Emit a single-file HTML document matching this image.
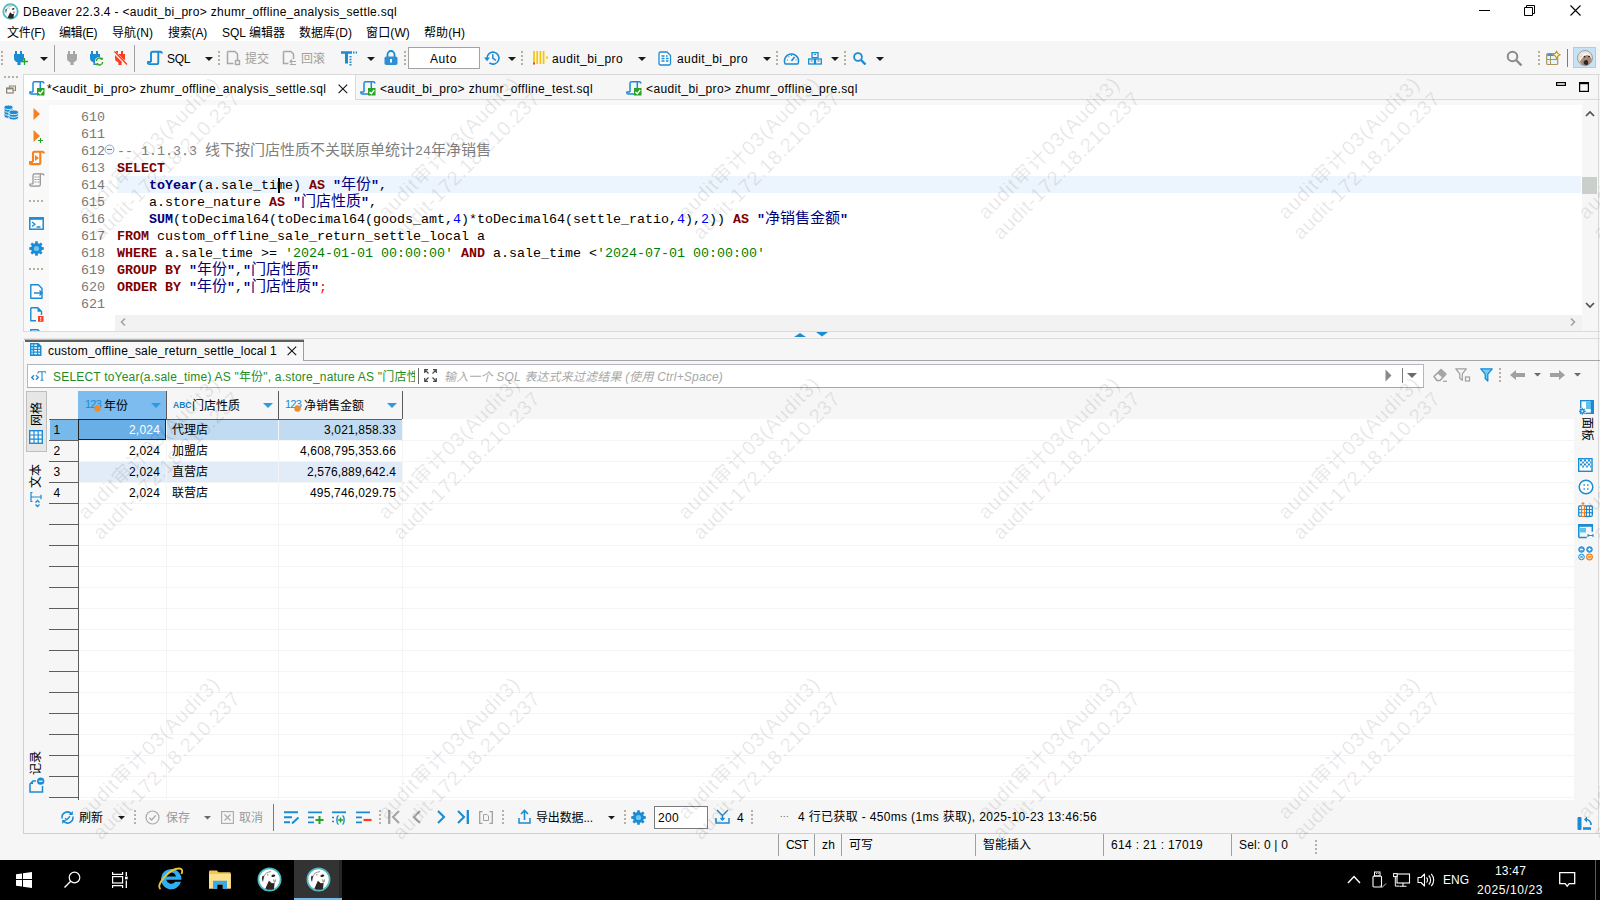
<!DOCTYPE html>
<html lang="zh"><head><meta charset="utf-8"><title>DBeaver</title><style>
html,body{margin:0;padding:0;}
body{width:1600px;height:900px;overflow:hidden;background:#fff;position:relative;font-family:"Liberation Sans","Noto Sans CJK SC",sans-serif;font-size:12px;}
.t{position:absolute;white-space:pre;display:block;}
.r{position:absolute;display:block;}
.cj{font-family:"Noto Sans CJK SC",sans-serif;}

.k{color:#7f0000;font-weight:bold;}
.f{color:#000080;font-weight:bold;}
.q{color:#000080;font-weight:bold;}
.n{color:#0000ff;}
.s{color:#008000;}
.c{color:#808080;}
.cc{font-family:"Noto Sans CJK SC",sans-serif;font-size:15px;letter-spacing:0;font-weight:normal;line-height:0;position:relative;top:-0.5px;}
.wm{position:absolute;width:300px;height:50px;transform:rotate(-45deg);transform-origin:50% 50%;text-align:center;color:rgba(0,0,0,0.062);text-shadow:0 0 1px rgba(0,0,0,0.045);font-size:20px;line-height:24.500px;white-space:pre;pointer-events:none;}
</style></head><body>
<div class="r" style="left:0px;top:0px;width:1600px;height:41px;background:#fff;"></div>
<div class="r" style="left:0px;top:41px;width:1600px;height:819px;background:#f6f6f6;"></div>
<div class="r" style="left:0px;top:860px;width:1600px;height:40px;background:#000;"></div>
<span class="t" style="left:23px;top:2.9px;height:18px;line-height:18px;font-size:12px;color:#000;letter-spacing:0.319px;">DBeaver 22.3.4 - &lt;audit_bi_pro&gt; zhumr_offline_analysis_settle.sql</span>
<span class="t" style="left:7px;top:23.9px;height:18px;line-height:18px;font-size:12px;color:#000;letter-spacing:-0.266px;">文件(F)</span>
<span class="t" style="left:59px;top:23.9px;height:18px;line-height:18px;font-size:12px;color:#000;letter-spacing:-0.400px;">编辑(E)</span>
<span class="t" style="left:112px;top:23.9px;height:18px;line-height:18px;font-size:12px;color:#000;letter-spacing:0.066px;">导航(N)</span>
<span class="t" style="left:168px;top:23.9px;height:18px;line-height:18px;font-size:12px;color:#000;letter-spacing:-0.200px;">搜索(A)</span>
<span class="t" style="left:222px;top:23.9px;height:18px;line-height:18px;font-size:12px;color:#000;letter-spacing:0.013px;">SQL 编辑器</span>
<span class="t" style="left:299px;top:23.9px;height:18px;line-height:18px;font-size:12px;color:#000;letter-spacing:0.055px;">数据库(D)</span>
<span class="t" style="left:366px;top:23.9px;height:18px;line-height:18px;font-size:12px;color:#000;letter-spacing:0.134px;">窗口(W)</span>
<span class="t" style="left:424px;top:23.9px;height:18px;line-height:18px;font-size:12px;color:#000;letter-spacing:0.066px;">帮助(H)</span>
<span class="t" style="left:167px;top:49.9px;height:18px;line-height:18px;font-size:12px;color:#000;letter-spacing:-0.339px;">SQL</span>
<span class="t" style="left:245px;top:49.9px;height:18px;line-height:18px;font-size:12px;color:#a0a0a0;letter-spacing:-0.008px;">提交</span>
<span class="t" style="left:301px;top:49.9px;height:18px;line-height:18px;font-size:12px;color:#a0a0a0;letter-spacing:-0.008px;">回滚</span>
<div class="r" style="left:408px;top:47px;width:72px;height:22px;background:#fff;border:1px solid #a3a3a3;box-sizing:border-box;"></div>
<span class="t" style="left:430px;top:49.9px;height:18px;line-height:18px;font-size:12px;color:#000;letter-spacing:0.578px;">Auto</span>
<span class="t" style="left:552px;top:49.9px;height:18px;line-height:18px;font-size:12px;color:#000;letter-spacing:0.411px;">audit_bi_pro</span>
<span class="t" style="left:677px;top:49.9px;height:18px;line-height:18px;font-size:12px;color:#000;letter-spacing:0.411px;">audit_bi_pro</span>
<div class="r" style="left:23px;top:74px;width:1577px;height:1px;background:#d9d9d9;"></div>
<div class="r" style="left:23px;top:74px;width:1px;height:258px;background:#d9d9d9;"></div>
<div class="r" style="left:24px;top:75px;width:332px;height:26px;background:#fff;"></div>
<div class="r" style="left:355px;top:75px;width:1px;height:25px;background:#d9d9d9;"></div>
<div class="r" style="left:24px;top:100px;width:1576px;height:231px;background:#fff;"></div>
<div class="r" style="left:356px;top:99px;width:1244px;height:1px;background:#d9d9d9;"></div>
<span class="t" style="left:47px;top:79.9px;height:18px;line-height:18px;font-size:12px;color:#000;letter-spacing:0.310px;">*&lt;audit_bi_pro&gt; zhumr_offline_analysis_settle.sql</span>
<span class="t" style="left:380px;top:79.9px;height:18px;line-height:18px;font-size:12px;color:#000;letter-spacing:0.351px;">&lt;audit_bi_pro&gt; zhumr_offline_test.sql</span>
<span class="t" style="left:646px;top:79.9px;height:18px;line-height:18px;font-size:12px;color:#000;letter-spacing:0.383px;">&lt;audit_bi_pro&gt; zhumr_offline_pre.sql</span>
<div class="r" style="left:24px;top:100px;width:1576px;height:5px;background:#f8f8f8;"></div>
<div class="r" style="left:24px;top:101px;width:25px;height:230px;background:#f9f9f9;"></div>
<div class="r" style="left:117px;top:176px;width:1464px;height:17px;background:#ecf4fd;"></div>
<div class="r" style="left:1582px;top:101px;width:18px;height:230px;background:#f6f6f6;"></div>
<div class="r" style="left:1582px;top:177px;width:15px;height:17px;background:#cbcfcb;"></div>
<div class="r" style="left:1598px;top:75px;width:1px;height:759px;background:#dadada;"></div>
<div class="r" style="left:115px;top:315px;width:1467px;height:16px;background:#f2f2f2;"></div>
<span class="t" style="left:81px;top:109.2px;height:17px;line-height:17px;font-size:13.333px;color:#787878;font-family:'Liberation Mono','Noto Sans CJK SC',monospace;">610</span>
<span class="t" style="left:81px;top:126.2px;height:17px;line-height:17px;font-size:13.333px;color:#787878;font-family:'Liberation Mono','Noto Sans CJK SC',monospace;">611</span>
<span class="t" style="left:81px;top:143.2px;height:17px;line-height:17px;font-size:13.333px;color:#787878;font-family:'Liberation Mono','Noto Sans CJK SC',monospace;">612</span>
<span class="t" style="left:117px;top:143.2px;height:17px;line-height:17px;font-size:13.333px;color:#000;font-family:'Liberation Mono','Noto Sans CJK SC',monospace;"><span class="c">-- 1.1.3.3 <span class="cc">线下按门店性质不关联原单统计</span>24<span class="cc">年净销售</span></span></span>
<span class="t" style="left:81px;top:160.2px;height:17px;line-height:17px;font-size:13.333px;color:#787878;font-family:'Liberation Mono','Noto Sans CJK SC',monospace;">613</span>
<span class="t" style="left:117px;top:160.2px;height:17px;line-height:17px;font-size:13.333px;color:#000;font-family:'Liberation Mono','Noto Sans CJK SC',monospace;"><span class="k">SELECT</span></span>
<span class="t" style="left:81px;top:177.2px;height:17px;line-height:17px;font-size:13.333px;color:#787878;font-family:'Liberation Mono','Noto Sans CJK SC',monospace;">614</span>
<span class="t" style="left:117px;top:177.2px;height:17px;line-height:17px;font-size:13.333px;color:#000;font-family:'Liberation Mono','Noto Sans CJK SC',monospace;">    <span class="f">toYear</span>(a.sale_time) <span class="k">AS</span> <span class="q">"<span class="cc">年份</span>"</span>,</span>
<span class="t" style="left:81px;top:194.2px;height:17px;line-height:17px;font-size:13.333px;color:#787878;font-family:'Liberation Mono','Noto Sans CJK SC',monospace;">615</span>
<span class="t" style="left:117px;top:194.2px;height:17px;line-height:17px;font-size:13.333px;color:#000;font-family:'Liberation Mono','Noto Sans CJK SC',monospace;">    a.store_nature <span class="k">AS</span> <span class="q">"<span class="cc">门店性质</span>"</span>,</span>
<span class="t" style="left:81px;top:211.2px;height:17px;line-height:17px;font-size:13.333px;color:#787878;font-family:'Liberation Mono','Noto Sans CJK SC',monospace;">616</span>
<span class="t" style="left:117px;top:211.2px;height:17px;line-height:17px;font-size:13.333px;color:#000;font-family:'Liberation Mono','Noto Sans CJK SC',monospace;">    <span class="f">SUM</span>(toDecimal64(toDecimal64(goods_amt,<span class="n">4</span>)*toDecimal64(settle_ratio,<span class="n">4</span>),<span class="n">2</span>)) <span class="k">AS</span> <span class="q">"<span class="cc">净销售金额</span>"</span></span>
<span class="t" style="left:81px;top:228.2px;height:17px;line-height:17px;font-size:13.333px;color:#787878;font-family:'Liberation Mono','Noto Sans CJK SC',monospace;">617</span>
<span class="t" style="left:117px;top:228.2px;height:17px;line-height:17px;font-size:13.333px;color:#000;font-family:'Liberation Mono','Noto Sans CJK SC',monospace;"><span class="k">FROM</span> custom_offline_sale_return_settle_local a</span>
<span class="t" style="left:81px;top:245.2px;height:17px;line-height:17px;font-size:13.333px;color:#787878;font-family:'Liberation Mono','Noto Sans CJK SC',monospace;">618</span>
<span class="t" style="left:117px;top:245.2px;height:17px;line-height:17px;font-size:13.333px;color:#000;font-family:'Liberation Mono','Noto Sans CJK SC',monospace;"><span class="k">WHERE</span> a.sale_time &gt;= <span class="s">'2024-01-01 00:00:00'</span> <span class="k">AND</span> a.sale_time &lt;<span class="s">'2024-07-01 00:00:00'</span></span>
<span class="t" style="left:81px;top:262.2px;height:17px;line-height:17px;font-size:13.333px;color:#787878;font-family:'Liberation Mono','Noto Sans CJK SC',monospace;">619</span>
<span class="t" style="left:117px;top:262.2px;height:17px;line-height:17px;font-size:13.333px;color:#000;font-family:'Liberation Mono','Noto Sans CJK SC',monospace;"><span class="k">GROUP BY</span> <span class="q">"<span class="cc">年份</span>"</span>,<span class="q">"<span class="cc">门店性质</span>"</span></span>
<span class="t" style="left:81px;top:279.2px;height:17px;line-height:17px;font-size:13.333px;color:#787878;font-family:'Liberation Mono','Noto Sans CJK SC',monospace;">620</span>
<span class="t" style="left:117px;top:279.2px;height:17px;line-height:17px;font-size:13.333px;color:#000;font-family:'Liberation Mono','Noto Sans CJK SC',monospace;"><span class="k">ORDER BY</span> <span class="q">"<span class="cc">年份</span>"</span>,<span class="q">"<span class="cc">门店性质</span>"</span><span style="color:#ff0000">;</span></span>
<span class="t" style="left:81px;top:296.2px;height:17px;line-height:17px;font-size:13.333px;color:#787878;font-family:'Liberation Mono','Noto Sans CJK SC',monospace;">621</span>
<div class="r" style="left:278px;top:178px;width:2px;height:15px;background:#000;"></div>
<div class="r" style="left:24px;top:331px;width:1576px;height:1px;background:#d9dcd9;"></div>
<div class="r" style="left:302px;top:338px;width:1298px;height:1px;background:#d9dcd9;"></div>
<div class="r" style="left:24px;top:341px;width:280px;height:22px;background:#f8f8f8;"></div>
<div class="r" style="left:303px;top:341px;width:1px;height:20px;background:#9c9c9c;"></div>
<div class="r" style="left:303px;top:360px;width:1297px;height:1px;background:#a6a6a6;"></div>
<span class="t" style="left:48px;top:342.1px;height:18px;line-height:18px;font-size:12px;color:#000;letter-spacing:0.205px;">custom_offline_sale_return_settle_local 1</span>
<div class="r" style="left:27px;top:364px;width:1397px;height:24px;background:#fff;border:1px solid #b4b8be;border-bottom-color:#a4a8b0;box-sizing:border-box;"></div>
<span class="t" style="left:53px;top:368.4px;height:18px;line-height:18px;font-size:12px;color:#1e8c1e;overflow:hidden;width:362px;letter-spacing:.2px;">SELECT toYear(a.sale_time) AS "年份", a.store_nature AS "门店性质", SUM(</span>
<span class="t" style="left:444px;top:367.9px;height:18px;line-height:18px;font-size:12px;color:#a8a8a8;letter-spacing:0.187px;font-style:italic;">输入一个 SQL 表达式来过滤结果 (使用 Ctrl+Space)</span>
<div class="r" style="left:79px;top:419px;width:1495px;height:381px;background:#fff;"></div>
<div class="r" style="left:78px;top:391px;width:88px;height:28px;background:#7cbcee;"></div>
<div class="r" style="left:78px;top:419px;width:324px;height:21px;background:#c1dcf2;"></div>
<div class="r" style="left:78px;top:461px;width:324px;height:21px;background:#e1ecf8;"></div>
<div class="r" style="left:50px;top:419px;width:28px;height:21px;background:#78b9ec;"></div>
<div class="r" style="left:78px;top:419px;width:88px;height:21px;background:#6aaee6;border:1px solid #222;box-sizing:border-box;"></div>
<span class="t" style="left:104px;top:396.9px;height:18px;line-height:18px;font-size:12px;color:#000;letter-spacing:-0.008px;">年份</span>
<span class="t" style="left:192px;top:396.9px;height:18px;line-height:18px;font-size:12px;color:#000;letter-spacing:-0.004px;">门店性质</span>
<span class="t" style="left:304px;top:396.9px;height:18px;line-height:18px;font-size:12px;color:#000;letter-spacing:-0.003px;">净销售金额</span>
<span class="t" style="left:53.4px;top:421.3px;height:18px;line-height:18px;font-size:12px;color:#000;">1</span>
<span class="t" style="left:129px;top:421.3px;height:18px;line-height:18px;font-size:12px;color:#fff;letter-spacing:0.194px;">2,024</span>
<span class="t" style="left:172px;top:421.3px;height:18px;line-height:18px;font-size:12px;color:#000;letter-spacing:-0.005px;">代理店</span>
<span class="t" style="left:324px;top:421.3px;height:18px;line-height:18px;font-size:12px;color:#000;letter-spacing:0.160px;">3,021,858.33</span>
<span class="t" style="left:53.4px;top:442.3px;height:18px;line-height:18px;font-size:12px;color:#000;">2</span>
<span class="t" style="left:129px;top:442.3px;height:18px;line-height:18px;font-size:12px;color:#000;letter-spacing:0.194px;">2,024</span>
<span class="t" style="left:172px;top:442.3px;height:18px;line-height:18px;font-size:12px;color:#000;letter-spacing:-0.005px;">加盟店</span>
<span class="t" style="left:300px;top:442.3px;height:18px;line-height:18px;font-size:12px;color:#000;letter-spacing:0.161px;">4,608,795,353.66</span>
<span class="t" style="left:53.4px;top:463.3px;height:18px;line-height:18px;font-size:12px;color:#000;">3</span>
<span class="t" style="left:129px;top:463.3px;height:18px;line-height:18px;font-size:12px;color:#000;letter-spacing:0.194px;">2,024</span>
<span class="t" style="left:172px;top:463.3px;height:18px;line-height:18px;font-size:12px;color:#000;letter-spacing:-0.005px;">直营店</span>
<span class="t" style="left:307px;top:463.3px;height:18px;line-height:18px;font-size:12px;color:#000;letter-spacing:0.150px;">2,576,889,642.4</span>
<span class="t" style="left:53.4px;top:484.3px;height:18px;line-height:18px;font-size:12px;color:#000;">4</span>
<span class="t" style="left:129px;top:484.3px;height:18px;line-height:18px;font-size:12px;color:#000;letter-spacing:0.194px;">2,024</span>
<span class="t" style="left:172px;top:484.3px;height:18px;line-height:18px;font-size:12px;color:#000;letter-spacing:-0.005px;">联营店</span>
<span class="t" style="left:310px;top:484.3px;height:18px;line-height:18px;font-size:12px;color:#000;letter-spacing:0.184px;">495,746,029.75</span>
<span class="t" style="left:79px;top:808.9px;height:18px;line-height:18px;font-size:12px;color:#000;letter-spacing:-0.008px;">刷新</span>
<span class="t" style="left:166px;top:808.9px;height:18px;line-height:18px;font-size:12px;color:#9a9a9a;letter-spacing:-0.008px;">保存</span>
<span class="t" style="left:239px;top:808.9px;height:18px;line-height:18px;font-size:12px;color:#9a9a9a;letter-spacing:-0.008px;">取消</span>
<span class="t" style="left:536px;top:808.9px;height:18px;line-height:18px;font-size:12px;color:#000;letter-spacing:-0.145px;">导出数据...</span>
<div class="r" style="left:654px;top:806px;width:54px;height:23px;background:#fff;border:1px solid #7a7a7a;box-sizing:border-box;"></div>
<span class="t" style="left:658px;top:808.9px;height:18px;line-height:18px;font-size:12px;color:#000;letter-spacing:0.323px;">200</span>
<span class="t" style="left:737px;top:808.9px;height:18px;line-height:18px;font-size:12px;color:#000;letter-spacing:0.312px;">4</span>
<span class="t" style="left:798px;top:808.2px;height:18px;line-height:18px;font-size:12px;color:#000;letter-spacing:0.338px;">4 行已获取 - 450ms (1ms 获取), 2025-10-23 13:46:56</span>
<span class="t" style="left:786px;top:836.1px;height:18px;line-height:18px;font-size:12px;color:#000;letter-spacing:-0.667px;">CST</span>
<span class="t" style="left:822px;top:836.1px;height:18px;line-height:18px;font-size:12px;color:#000;letter-spacing:0.156px;">zh</span>
<span class="t" style="left:849px;top:836.1px;height:18px;line-height:18px;font-size:12px;color:#000;letter-spacing:-0.008px;">可写</span>
<span class="t" style="left:983px;top:836.1px;height:18px;line-height:18px;font-size:12px;color:#000;letter-spacing:-0.004px;">智能插入</span>
<span class="t" style="left:1111px;top:836.1px;height:18px;line-height:18px;font-size:12px;color:#000;letter-spacing:0.328px;">614 : 21 : 17019</span>
<span class="t" style="left:1239px;top:836.1px;height:18px;line-height:18px;font-size:12px;color:#000;letter-spacing:0.184px;">Sel: 0 | 0</span>
<span class="t" style="left:1443px;top:870.9px;height:18px;line-height:18px;font-size:12px;color:#fff;letter-spacing:-0.005px;">ENG</span>
<span class="t" style="left:1495px;top:861.7px;height:18px;line-height:18px;font-size:12px;color:#fff;letter-spacing:0.194px;">13:47</span>
<span class="t" style="left:1477px;top:880.7px;height:18px;line-height:18px;font-size:12px;color:#fff;letter-spacing:0.594px;">2025/10/23</span>
<svg class="r" style="left:1px;top:51px;" width="2" height="14" viewBox="0 0 2 14"><line x1="1" y1="0" x2="1" y2="14" stroke="#b9b19e" stroke-width="2" stroke-dasharray="2 2"/></svg>
<svg class="r" style="left:12px;top:51px;" width="16" height="15" viewBox="0 0 16 15"><path d="M3 0h2v3h3V0h2v3h2v4.2c0 2.2-1.6 3.6-3.4 4V14H5.4v-2.8C3.6 10.8 2 9.400 2 7.2V3h1z" fill="#1b8bd3"/><path d="M12.500 7v7M9 10.500h7" stroke="#27a327" stroke-width="1.300" fill="none"/></svg>
<svg class="r" style="left:39.5px;top:57.0px;" width="8" height="4.0" viewBox="0 0 8 4.0"><polygon points="0,0 8,0 4.0,4.0" fill="#1a1a1a"/></svg>
<div class="r" style="left:54px;top:45px;width:1px;height:27px;background:#a0a0a0;"></div>
<svg class="r" style="left:65px;top:51px;" width="16" height="15" viewBox="0 0 16 15"><path d="M3 0h2v3h3V0h2v3h2v4.2c0 2.2-1.6 3.6-3.4 4V14H5.4v-2.8C3.6 10.8 2 9.400 2 7.2V3h1z" fill="#a6a6a6"/></svg>
<svg class="r" style="left:88px;top:51px;" width="16" height="15" viewBox="0 0 16 15"><path d="M3 0h2v3h3V0h2v3h2v4.2c0 2.2-1.6 3.6-3.4 4V14H5.4v-2.8C3.6 10.8 2 9.400 2 7.2V3h1z" fill="#1b8bd3"/><circle cx="11.5" cy="10.5" r="4.6" fill="#f6f6f6"/><path d="M8.300 10a3.300 3.300 0 0 1 5.800-1.800M14.700 11a3.300 3.300 0 0 1-5.800 1.800" stroke="#27a327" stroke-width="1.400" fill="none"/><path d="M14.800 6.200v2.600h-2.600zM8.200 14.800v-2.600h2.600z" fill="#27a327"/></svg>
<svg class="r" style="left:113px;top:51px;" width="16" height="15" viewBox="0 0 16 15"><path d="M3 0h2v3h3V0h2v3h2v4.2c0 2.2-1.6 3.6-3.4 4V14H5.4v-2.8C3.6 10.8 2 9.400 2 7.2V3h1z" fill="#ff3b1e"/><path d="M1 1l13 13" stroke="#f6f6f6" stroke-width="3"/><path d="M1.500 0.500l12.500 13" stroke="#ff3b1e" stroke-width="1.300"/></svg>
<div class="r" style="left:134px;top:45px;width:1px;height:27px;background:#a0a0a0;"></div>
<svg class="r" style="left:147px;top:50px;" width="16" height="16" viewBox="0 0 16 16"><path d="M14.800 3.500c0-1.100-.5-1.700-1.500-1.700H5.500C4.500 1.800 4 2.400 4 3.400V12M11.300 2V12.500c0 1-.5 1.600-1.500 1.600H2.300c-1 0-1.500-.6-1.500-1.600V12H4" fill="none" stroke="#1b8bd3" stroke-width="1.9" stroke-linejoin="round"/></svg>
<svg class="r" style="left:204.5px;top:57.0px;" width="8" height="4.0" viewBox="0 0 8 4.0"><polygon points="0,0 8,0 4.0,4.0" fill="#1a1a1a"/></svg>
<svg class="r" style="left:218px;top:51px;" width="2" height="14" viewBox="0 0 2 14"><line x1="1" y1="0" x2="1" y2="14" stroke="#b9b19e" stroke-width="2" stroke-dasharray="2 2"/></svg>
<svg class="r" style="left:226px;top:50px;" width="16" height="16" viewBox="0 0 16 16"><path d="M1.500 1.500h7.500l2.500 2.500v6.500M7.500 13.500h-6v-12" fill="none" stroke="#a8a8a8" stroke-width="1.500"/><rect x="9.500" y="10.500" width="4" height="4" fill="none" stroke="#a8a8a8" stroke-width="1.400"/></svg>
<svg class="r" style="left:282px;top:50px;" width="16" height="16" viewBox="0 0 16 16"><path d="M1.500 1.500h7.500l2.500 2.500v5M6.500 13.500h-5v-12" fill="none" stroke="#a8a8a8" stroke-width="1.500"/><path d="M8 11.500h6M10 9.500l-2 2 2 2M8 14.500h6" fill="none" stroke="#a8a8a8" stroke-width="1.100"/></svg>
<svg class="r" style="left:341px;top:50px;" width="16" height="16" viewBox="0 0 16 16"><path d="M0 1.200h11v2.600h-4v9.700h-3v-9.700h-4z" fill="#1b8bd3"/><path d="M12 2.500h4M9.500 6v10" stroke="#1b8bd3" stroke-width="2" stroke-dasharray="1.500 1.200" fill="none"/></svg>
<svg class="r" style="left:366.5px;top:57.0px;" width="8" height="4.0" viewBox="0 0 8 4.0"><polygon points="0,0 8,0 4.0,4.0" fill="#1a1a1a"/></svg>
<svg class="r" style="left:384px;top:50px;" width="14" height="16" viewBox="0 0 14 16"><path d="M3.500 7v-2.500a3.500 3.500 0 0 1 7 0v2.500" fill="none" stroke="#1b8bd3" stroke-width="1.800"/><rect x="0.500" y="6.500" width="13" height="8.500" rx="1.800" fill="#2f8fd6"/><rect x="6" y="9" width="2" height="3.500" fill="#fff"/></svg>
<svg class="r" style="left:404px;top:51px;" width="2" height="14" viewBox="0 0 2 14"><line x1="1" y1="0" x2="1" y2="14" stroke="#b9b19e" stroke-width="2" stroke-dasharray="2 2"/></svg>
<svg class="r" style="left:484px;top:50px;" width="17" height="16" viewBox="0 0 17 16"><path d="M3 8.300a6 6 0 1 1 2.400 4.600" fill="none" stroke="#1b8bd3" stroke-width="1.600"/><path d="M0 7.600h6l-3 3.600z" fill="#1b8bd3"/><path d="M8.800 4.300v3.800l3 2.200" fill="none" stroke="#1b8bd3" stroke-width="1.500"/></svg>
<svg class="r" style="left:507.5px;top:57.0px;" width="8" height="4.0" viewBox="0 0 8 4.0"><polygon points="0,0 8,0 4.0,4.0" fill="#1a1a1a"/></svg>
<svg class="r" style="left:521px;top:51px;" width="2" height="14" viewBox="0 0 2 14"><line x1="1" y1="0" x2="1" y2="14" stroke="#b9b19e" stroke-width="2" stroke-dasharray="2 2"/></svg>
<svg class="r" style="left:533px;top:51px;" width="16" height="14" viewBox="0 0 16 14"><path d="M1 0v13M4.200 0v13M7.400 0v13M10.600 0v13" stroke="#f7c400" stroke-width="1.700"/><rect x="0" y="11.500" width="2" height="2" fill="#ff3b1e"/><rect x="13" y="5.500" width="2" height="2" fill="#f7c400"/></svg>
<svg class="r" style="left:637.5px;top:57.0px;" width="8" height="4.0" viewBox="0 0 8 4.0"><polygon points="0,0 8,0 4.0,4.0" fill="#1a1a1a"/></svg>
<svg class="r" style="left:658px;top:51px;" width="14" height="15" viewBox="0 0 14 15"><path d="M1 2.500a1.500 1.500 0 0 1 1.500-1.500h6.500l3.500 3.500v8a1.500 1.500 0 0 1-1.500 1.500h-8.500a1.500 1.500 0 0 1-1.500-1.500z" fill="#fff" stroke="#1b8bd3" stroke-width="1.300"/><path d="M3.500 5h3M3.500 7.500h3M3.500 10h3M8 7.500h2.500M8 10h2.500M8 5h1.500" stroke="#1b8bd3" stroke-width="1.300"/></svg>
<svg class="r" style="left:762.5px;top:57.0px;" width="8" height="4.0" viewBox="0 0 8 4.0"><polygon points="0,0 8,0 4.0,4.0" fill="#1a1a1a"/></svg>
<svg class="r" style="left:776px;top:51px;" width="2" height="14" viewBox="0 0 2 14"><line x1="1" y1="0" x2="1" y2="14" stroke="#b9b19e" stroke-width="2" stroke-dasharray="2 2"/></svg>
<svg class="r" style="left:783px;top:52px;" width="17" height="13" viewBox="0 0 17 13"><path d="M2.200 12a7 7 0 1 1 12.600 0z" fill="none" stroke="#1b8bd3" stroke-width="1.500" stroke-linejoin="round"/><path d="M8.500 9l3-4" stroke="#1b8bd3" stroke-width="1.600"/><path d="M4 8h1M5.500 4.500l.7.700M8.500 3v1M12.500 8h1" stroke="#1b8bd3" stroke-width="1.100"/></svg>
<svg class="r" style="left:808px;top:52px;" width="14" height="13" viewBox="0 0 14 13"><rect x="4" y=".7" width="6" height="5" fill="none" stroke="#1b8bd3" stroke-width="1.300"/><rect x=".7" y="7" width="5.800" height="5" fill="none" stroke="#1b8bd3" stroke-width="1.300"/><rect x="7.500" y="7" width="5.800" height="5" fill="none" stroke="#1b8bd3" stroke-width="1.300"/><path d="M6 2.500h2M2.700 9h2M9.500 9h2" stroke="#1b8bd3" stroke-width="1"/></svg>
<svg class="r" style="left:830.5px;top:57.0px;" width="8" height="4.0" viewBox="0 0 8 4.0"><polygon points="0,0 8,0 4.0,4.0" fill="#1a1a1a"/></svg>
<svg class="r" style="left:844px;top:51px;" width="2" height="14" viewBox="0 0 2 14"><line x1="1" y1="0" x2="1" y2="14" stroke="#b9b19e" stroke-width="2" stroke-dasharray="2 2"/></svg>
<svg class="r" style="left:853px;top:52px;" width="14" height="13" viewBox="0 0 14 13"><circle cx="5" cy="5" r="3.900" fill="none" stroke="#1b8bd3" stroke-width="1.800"/><path d="M8 8l4.500 4.500" stroke="#1b8bd3" stroke-width="2.400"/></svg>
<svg class="r" style="left:875.5px;top:57.0px;" width="8" height="4.0" viewBox="0 0 8 4.0"><polygon points="0,0 8,0 4.0,4.0" fill="#1a1a1a"/></svg>
<svg class="r" style="left:1506px;top:50px;" width="17" height="17" viewBox="0 0 17 17"><circle cx="6.500" cy="6.500" r="4.800" fill="none" stroke="#8a8a8a" stroke-width="2"/><path d="M10 10l5.500 5.500" stroke="#8a8a8a" stroke-width="2.400"/></svg>
<svg class="r" style="left:1538px;top:51px;" width="2" height="14" viewBox="0 0 2 14"><line x1="1" y1="0" x2="1" y2="14" stroke="#b9b19e" stroke-width="2" stroke-dasharray="2 2"/></svg>
<svg class="r" style="left:1546px;top:50px;" width="15" height="16" viewBox="0 0 15 16"><rect x=".7" y="3.500" width="11" height="11" rx="1" fill="#e8f4fb" stroke="#a89660" stroke-width="1.200"/><rect x="1.300" y="4" width="9.800" height="2" fill="#4a90d9"/><path d="M4.500 6v8M1 9.500h10.500" stroke="#a89660" stroke-width="1"/><path d="M10.500 1l1.200 2.500 2.500 1.200-2.500 1.200-1.200 2.500-1.200-2.500-2.500-1.200 2.500-1.200z" fill="#fffbe8" stroke="#c09a20" stroke-width="1.100" stroke-linejoin="round"/></svg>
<div class="r" style="left:1567px;top:49px;width:1px;height:18px;background:#7a7e7a;"></div>
<div class="r" style="left:1573px;top:47px;width:23px;height:21px;background:#c6e2f7;border:1px solid #9fd0f7;box-sizing:border-box;"></div>
<svg class="r" style="left:1577px;top:50px;" width="16" height="16" viewBox="0 0 16 16"><circle cx="8" cy="8" r="7.500" fill="#eee3d5"/><path d="M2.500 10c.5-3.500 3.500-5.500 7-5 2.800.4 4.800 2.200 5.300 4.600-.3 3.300-3 5.800-6.500 5.900-2.800 0-5.300-2-5.800-5.500z" fill="#a68b7b"/><path d="M3 10.500c1-3 2.800-5 6-6" fill="none" stroke="#fff" stroke-width="1.500"/><path d="M6.500 4.200c2-.4 4.500-.2 6 .6" fill="none" stroke="#fff" stroke-width="1"/><circle cx="7.600" cy="6.600" r=".9" fill="#2a201c"/><circle cx="12" cy="6.600" r=".9" fill="#2a201c"/><path d="M6.500 12.500c.6-2 2-2.800 3.600-2.400 1.300 1.600 1.400 3.200.8 4.900-2 .7-3.600.1-4.400-2.500z" fill="#30241f"/><circle cx="8" cy="8" r="7.500" fill="none" stroke="#8a8078" stroke-width=".7"/></svg>
<div class="r" style="left:1479px;top:10px;width:11px;height:1px;background:#000;"></div>
<svg class="r" style="left:1524px;top:5px;" width="11" height="11" viewBox="0 0 11 11"><path d="M.5 2.500h8v8h-8zM2.500 2.500v-2h8v8h-2" fill="none" stroke="#000" stroke-width="1"/></svg>
<svg class="r" style="left:1570px;top:5px;" width="11" height="11" viewBox="0 0 11 11"><path d="M.5.5l10 10M10.500.5l-10 10" stroke="#000" stroke-width="1.100"/></svg>
<svg class="r" style="left:1.5px;top:2.5px;" width="17" height="17" viewBox="0 0 24 24"><circle cx="12" cy="12" r="10.19" fill="#fff" stroke="#54bcbc" stroke-width="2.61"/><path d="M11.400 13.200l2.900 2.500 2.600-.3-.6 5.600c-2.500 1.300-5.500 1.300-8.300-.2l2.300-5.300z" fill="#2e2522"/><ellipse cx="15.700" cy="8.400" rx="1.900" ry="1.200" transform="rotate(-15 15.700 8.400)" fill="#2e2522"/><path d="M5.300 8.300c-.9 1.800-.6 4.200.5 6.200.3-2.300.6-4 1.300-5.700z" fill="#3a302c"/><path d="M6.500 9c1-2.500 3.500-4.300 7-4.600" fill="none" stroke="#6a5f5a" stroke-width=".7"/><circle cx="10.400" cy="7.500" r=".55" fill="#3a302c"/><path d="M16 12l.6 2.900M17.800 12l-.6 2.600" stroke="#3a302c" stroke-width=".6" fill="none"/></svg>
<svg class="r" style="left:4px;top:76px;" width="15" height="2" viewBox="0 0 15 2"><line x1="0" y1="1" x2="15" y2="1" stroke="#b9b19e" stroke-width="2" stroke-dasharray="2 2"/></svg>
<svg class="r" style="left:6px;top:85px;" width="10" height="9" viewBox="0 0 10 9"><path d="M3.500 2.500v-1.500h6v4.500h-2" fill="none" stroke="#8c8474" stroke-width="1.200"/><rect x=".6" y="3" width="6.500" height="5" fill="none" stroke="#8c8474" stroke-width="1.200"/><path d="M.6 3.700h6.500" stroke="#8c8474" stroke-width="1.400"/></svg>
<svg class="r" style="left:3px;top:104px;" width="16" height="16" viewBox="0 0 16 16"><g fill="#1b8bd3" stroke="#f6f6f6" stroke-width=".9"><path d="M1 9.500v2.500c0 1.400 2.200 2.300 4.500 2.300s4.500-.9 4.500-2.300v-2.500z"/><path d="M1 6.500v2.500c0 1.400 2.200 2.300 4.500 2.300s4.500-.9 4.500-2.300v-2.500z"/><path d="M1 3.500v2.500c0 1.400 2.200 2.300 4.500 2.300s4.500-.9 4.500-2.300v-2.500z"/><ellipse cx="5.500" cy="3.300" rx="4.500" ry="2.200"/><path d="M6 11.500v2.300c0 1.400 2.200 2.200 4.700 2.200s4.700-.8 4.700-2.200v-2.300z"/><path d="M6 8.500v2.500c0 1.400 2.200 2.300 4.700 2.300s4.700-.9 4.700-2.300v-2.500z"/><ellipse cx="10.700" cy="8.300" rx="4.700" ry="2.300"/></g></svg>
<svg class="r" style="left:29px;top:80px;" width="16" height="16" viewBox="0 0 16 16"><path d="M14.800 3.500c0-1.100-.5-1.700-1.500-1.700H5.500C4.500 1.800 4 2.400 4 3.400V12M11.300 2V12.500c0 1-.5 1.600-1.500 1.600H2.300c-1 0-1.500-.6-1.500-1.600V12H4" fill="none" stroke="#1b8bd3" stroke-width="1.5" stroke-linejoin="round"/><rect x="8" y="8" width="7.500" height="7.500" fill="#27a327"/><path d="M9.500 12l1.800 1.800 2.900-3.800" fill="none" stroke="#fff" stroke-width="1.400"/></svg>
<svg class="r" style="left:360px;top:80px;" width="16" height="16" viewBox="0 0 16 16"><path d="M14.800 3.500c0-1.100-.5-1.700-1.500-1.700H5.500C4.500 1.800 4 2.400 4 3.400V12M11.300 2V12.500c0 1-.5 1.600-1.500 1.600H2.300c-1 0-1.500-.6-1.500-1.600V12H4" fill="none" stroke="#1b8bd3" stroke-width="1.5" stroke-linejoin="round"/><rect x="8" y="8" width="7.500" height="7.500" fill="#27a327"/><path d="M9.500 12l1.800 1.800 2.900-3.800" fill="none" stroke="#fff" stroke-width="1.400"/></svg>
<svg class="r" style="left:626px;top:80px;" width="16" height="16" viewBox="0 0 16 16"><path d="M14.800 3.500c0-1.100-.5-1.700-1.500-1.700H5.500C4.500 1.800 4 2.400 4 3.400V12M11.300 2V12.500c0 1-.5 1.600-1.500 1.600H2.300c-1 0-1.500-.6-1.500-1.600V12H4" fill="none" stroke="#1b8bd3" stroke-width="1.5" stroke-linejoin="round"/><rect x="8" y="8" width="7.500" height="7.500" fill="#27a327"/><path d="M9.500 12l1.800 1.800 2.900-3.800" fill="none" stroke="#fff" stroke-width="1.400"/></svg>
<svg class="r" style="left:338px;top:84px;" width="10" height="10" viewBox="0 0 10 10"><path d="M.6.600l8.600 8.600M9.200.6l-8.600 8.600" stroke="#111" stroke-width="1.100"/></svg>
<svg class="r" style="left:1556px;top:82px;" width="10" height="4" viewBox="0 0 10 4"><rect x=".6" y=".6" width="8.800" height="2.800" fill="none" stroke="#000" stroke-width="1.200"/></svg>
<svg class="r" style="left:1579px;top:82px;" width="10" height="10" viewBox="0 0 10 10"><rect x=".6" y=".6" width="8.800" height="8.800" fill="none" stroke="#000" stroke-width="1.200"/><rect x=".6" y=".6" width="8.800" height="1.600" fill="#000"/></svg>
<svg class="r" style="left:33px;top:108px;" width="8" height="12" viewBox="0 0 8 12"><path d="M.5 0l6.500 6-6.500 6z" fill="#f5821f"/></svg>
<svg class="r" style="left:33px;top:130px;" width="12" height="13" viewBox="0 0 12 13"><path d="M.5 0l6.500 6-6.500 6z" fill="#f5821f"/><path d="M7.500 8v5M5 10.500h5" stroke="#27a327" stroke-width="1"/></svg>
<svg class="r" style="left:28.5px;top:150px;" width="16" height="16" viewBox="0 0 16 16"><path d="M14.800 3.500c0-1.100-.5-1.700-1.500-1.700H5.500C4.500 1.800 4 2.400 4 3.400V12M11.300 2V12.500c0 1-.5 1.600-1.500 1.600H2.300c-1 0-1.500-.6-1.500-1.600V12H4" fill="none" stroke="#f5821f" stroke-width="2.1" stroke-linejoin="round"/><path d="M6 5l4 3-4 3z" fill="#f5821f"/></svg>
<svg class="r" style="left:28.5px;top:172px;" width="16" height="16" viewBox="0 0 16 16"><path d="M14.800 3.500c0-1.100-.5-1.700-1.500-1.700H5.500C4.500 1.800 4 2.400 4 3.400V12M11.300 2V12.500c0 1-.5 1.600-1.500 1.600H2.300c-1 0-1.500-.6-1.500-1.600V12H4" fill="none" stroke="#909090" stroke-width="1.2" stroke-linejoin="round"/><path d="M5.500 5h2M8.500 5h2M5.500 7.500h2M8.500 7.500h2M5.500 10h2M8.500 10h2" stroke="#9a9a9a" stroke-width="1"/></svg>
<svg class="r" style="left:29px;top:200px;" width="14" height="2" viewBox="0 0 14 2"><line x1="0" y1="1" x2="14" y2="1" stroke="#b9b19e" stroke-width="2" stroke-dasharray="2 2"/></svg>
<svg class="r" style="left:29px;top:217px;" width="15" height="13" viewBox="0 0 15 13"><rect x=".8" y=".8" width="13.400" height="11.400" fill="#fff" stroke="#1b8bd3" stroke-width="1.500"/><rect x=".8" y=".8" width="13.400" height="2" fill="#1b8bd3"/><path d="M3 5l3 2.300-3 2.300M7.500 10h4" fill="none" stroke="#1b8bd3" stroke-width="1.300"/></svg>
<svg class="r" style="left:29px;top:241px;" width="15" height="15" viewBox="0 0 15 15"><path d="M6.09 2.18L6.25 0.21L8.75 0.21L8.91 2.18L10.26 2.74L11.77 1.46L13.54 3.23L12.26 4.74L12.82 6.09L14.79 6.25L14.79 8.75L12.82 8.91L12.26 10.26L13.54 11.77L11.77 13.54L10.26 12.26L8.91 12.82L8.75 14.79L6.25 14.79L6.09 12.82L4.74 12.26L3.23 13.54L1.46 11.77L2.74 10.26L2.18 8.91L0.21 8.75L0.21 6.25L2.18 6.09L2.74 4.74L1.46 3.23L3.23 1.46L4.74 2.74z" fill="#1b8bd3"/><circle cx="7.500" cy="7.500" r="2.600" fill="#6cc7f0"/></svg>
<svg class="r" style="left:29px;top:268px;" width="14" height="2" viewBox="0 0 14 2"><line x1="0" y1="1" x2="14" y2="1" stroke="#b9b19e" stroke-width="2" stroke-dasharray="2 2"/></svg>
<svg class="r" style="left:30px;top:284px;" width="14" height="15" viewBox="0 0 14 15"><path d="M.8.800h7.500l3.700 3.700v9.700h-11.200z" fill="#fff" stroke="#1b8bd3" stroke-width="1.400" stroke-linejoin="round"/><path d="M4 9h8M9.500 6.500l2.500 2.500-2.500 2.500" fill="none" stroke="#1b8bd3" stroke-width="1.400"/></svg>
<svg class="r" style="left:30px;top:307px;" width="14" height="15" viewBox="0 0 14 15"><path d="M.8.800h7l3.700 3.700v3.500M6 13.700h-5.200v-12.900" fill="none" stroke="#1b8bd3" stroke-width="1.400" stroke-linejoin="round"/><path d="M7.500 .8v4h4z" fill="#1b8bd3"/><rect x="8" y="9" width="5.500" height="5.800" fill="#ff3b1e"/><path d="M10.700 10v2.500M10.700 13.200v.9" stroke="#fff" stroke-width="1.100"/></svg>
<svg class="r" style="left:30px;top:329px;" width="14" height="2" viewBox="0 0 14 2"><path d="M.8 2v-1.200h7l1.500 1.200" fill="none" stroke="#1b8bd3" stroke-width="1.400"/></svg>
<svg class="r" style="left:104px;top:144px;" width="11" height="11" viewBox="0 0 11 11"><circle cx="5.500" cy="5.500" r="4.500" fill="#f4f8fc" stroke="#8ea9c4" stroke-width="1"/><path d="M3 5.500h5" stroke="#5c7a99" stroke-width="1"/></svg>
<svg class="r" style="left:1584px;top:110px;" width="12" height="8" viewBox="0 0 12 8"><path d="M2 6l4-4 4 4" fill="none" stroke="#505050" stroke-width="1.700"/></svg>
<svg class="r" style="left:1584px;top:301px;" width="12" height="8" viewBox="0 0 12 8"><path d="M2 2l4 4 4-4" fill="none" stroke="#505050" stroke-width="1.700"/></svg>
<svg class="r" style="left:119px;top:317px;" width="8" height="10" viewBox="0 0 8 10"><path d="M6 1.500l-3.500 3.500 3.500 3.500" fill="none" stroke="#a0a0a0" stroke-width="1.500"/></svg>
<svg class="r" style="left:1569px;top:317px;" width="8" height="10" viewBox="0 0 8 10"><path d="M2 1.500l3.500 3.500-3.500 3.500" fill="none" stroke="#a0a0a0" stroke-width="1.500"/></svg>
<svg class="r" style="left:794px;top:332px;" width="12" height="5" viewBox="0 0 12 5"><polygon points="0,5 6,1 12,5" fill="#1b8bd3"/></svg>
<svg class="r" style="left:816px;top:332px;" width="12" height="5" viewBox="0 0 12 5"><polygon points="0,0 12,0 6,4.500" fill="#1b8bd3"/></svg>
<div class="r" style="left:24px;top:338px;width:280px;height:2px;background:linear-gradient(#f6f6f6,#a8aaa8);"></div>
<div class="r" style="left:25px;top:340px;width:279px;height:2px;background:#5c605c;"></div>
<svg class="r" style="left:30px;top:343px;" width="12" height="13" viewBox="0 0 12 13"><path d="M0 0h8.500l3 3v10h-11.500z" fill="#1b8bd3"/><path d="M1.500 2.200h1.600M4.300 2.200h2.600M1.500 5h1.600M4.300 5h2.600M8.200 5h1.800M1.500 7.800h1.600M4.300 7.800h2.600M8.200 7.800h1.800M1.500 10.600h1.600M4.300 10.600h2.600M8.200 10.600h1.800" stroke="#fff" stroke-width="1.500"/><path d="M1.500 2.200h1.600M1.500 5h1.600M1.500 7.800h1.600M1.500 10.600h1.600" stroke="#7fd3f7" stroke-width="1.500"/></svg>
<svg class="r" style="left:287px;top:346px;" width="10" height="10" viewBox="0 0 10 10"><path d="M.6.600l8.600 8.600M9.200.6l-8.600 8.600" stroke="#111" stroke-width="1.100"/></svg>
<svg class="r" style="left:31px;top:371px;" width="15" height="10" viewBox="0 0 15 10"><path d="M3 4.200l-2.300 2.300 2.300 2.300M5 4.200l2.300 2.300-2.300 2.300" fill="none" stroke="#1b8bd3" stroke-width="1.300"/><path d="M7 1v1.500M7 .8h8M15 1v1.500M11 .8v8.500M9.500 9.300h3" fill="none" stroke="#1b8bd3" stroke-width="1.100"/></svg>
<div class="r" style="left:418px;top:368px;width:1px;height:16px;background:#6a6a6a;"></div>
<svg class="r" style="left:424px;top:369px;" width="13" height="13" viewBox="0 0 13 13"><path d="M.7 4v-3.300h3.300M9 .7h3.300v3.300M12.300 9v3.300h-3.300M4 12.300h-3.300v-3.300M1 1l3.500 3.500M12 1l-3.500 3.500M12 12l-3.500-3.500M1 12l3.500-3.500" fill="none" stroke="#4a4a4a" stroke-width="1.200"/></svg>
<svg class="r" style="left:1385px;top:369px;" width="7" height="13" viewBox="0 0 7 13"><path d="M.5.500l6 6-6 6z" fill="#8a8a8a"/></svg>
<div class="r" style="left:1402px;top:368px;width:1px;height:15px;background:#7a7a7a;"></div>
<svg class="r" style="left:1407.0px;top:373.0px;" width="10" height="5.0" viewBox="0 0 10 5.0"><polygon points="0,0 10,0 5.0,5.0" fill="#6a6a6a"/></svg>
<svg class="r" style="left:1433px;top:368px;" width="15" height="14" viewBox="0 0 15 14"><path d="M1 8.500l7-7 5 4.500-6 6.500h-3z" fill="none" stroke="#a0a0a0" stroke-width="1.500" stroke-linejoin="round"/><path d="M4.300 5.200l3.700-3.700 5 4.500-3.500 3.800z" fill="#a6a6a6"/><path d="M10 13.300h4" stroke="#a0a0a0" stroke-width="1.200"/></svg>
<svg class="r" style="left:1455px;top:368px;" width="16" height="14" viewBox="0 0 16 14"><path d="M.8.800h10.500l-4 5v6.500l-2.500-2v-4.500z" fill="none" stroke="#a0a0a0" stroke-width="1.200" stroke-linejoin="round"/><rect x="10.500" y="9" width="4" height="4" fill="none" stroke="#a0a0a0" stroke-width="1.200"/></svg>
<svg class="r" style="left:1480px;top:368px;" width="13" height="14" viewBox="0 0 13 14"><path d="M.8.800h11.400l-4.400 5.400v6.800l-2.600-2.400v-4.400z" fill="#6ccff5" stroke="#1b8bd3" stroke-width="1.300" stroke-linejoin="round"/></svg>
<svg class="r" style="left:1499px;top:368px;" width="2" height="14" viewBox="0 0 2 14"><line x1="1" y1="0" x2="1" y2="14" stroke="#b9b19e" stroke-width="2" stroke-dasharray="2 2"/></svg>
<svg class="r" style="left:1510px;top:370px;" width="15" height="10" viewBox="0 0 15 10"><path d="M0 5l6-5v3h9v4h-9v3z" fill="#a0a0a0"/></svg>
<svg class="r" style="left:1534.0px;top:373.25px;" width="7" height="3.5" viewBox="0 0 7 3.5"><polygon points="0,0 7,0 3.5,3.5" fill="#6a6a6a"/></svg>
<svg class="r" style="left:1550px;top:370px;" width="15" height="10" viewBox="0 0 15 10"><path d="M15 5l-6-5v3h-9v4h9v3z" fill="#a0a0a0"/></svg>
<svg class="r" style="left:1574.0px;top:373.25px;" width="7" height="3.5" viewBox="0 0 7 3.5"><polygon points="0,0 7,0 3.5,3.5" fill="#6a6a6a"/></svg>
<div class="r" style="left:26px;top:391px;width:21px;height:61px;background:#e6e6e6;border:1px solid #bfbfbf;box-sizing:border-box;"></div>
<span class="t" style="left:36.500px;top:413.500px;width:0;height:0;"><span style="position:absolute;left:-15px;top:-8px;width:30px;height:16px;line-height:16px;text-align:center;font-size:12px;transform:rotate(-90deg);">网格</span></span>
<svg class="r" style="left:29px;top:430px;" width="14" height="14" viewBox="0 0 14 14"><rect x=".7" y=".7" width="12.600" height="12.600" fill="#fff" stroke="#1b8bd3" stroke-width="1.400"/><path d="M5 1v12M9.200 1v12M1 5h12M1 9.200h12" stroke="#1b8bd3" stroke-width="1.200"/></svg>
<span class="t" style="left:35.800px;top:476.300px;width:0;height:0;"><span style="position:absolute;left:-15px;top:-8px;width:30px;height:16px;line-height:16px;text-align:center;font-size:12px;transform:rotate(-90deg);">文本</span></span>
<svg class="r" style="left:30px;top:491px;" width="12" height="17" viewBox="0 0 12 17"><path d="M2.500 1.500h-1.500v9h1.500M1 6h10M11 3.800v4.400" fill="none" stroke="#1b8bd3" stroke-width="1.200"/><path d="M5.500 11.500l2-2 2 2M5.500 13.500l2 2 2-2" fill="none" stroke="#1b8bd3" stroke-width="1.300"/></svg>
<span class="t" style="left:35.800px;top:762.800px;width:0;height:0;"><span style="position:absolute;left:-15px;top:-8px;width:30px;height:16px;line-height:16px;text-align:center;font-size:12px;transform:rotate(-90deg);">记录</span></span>
<svg class="r" style="left:29px;top:777px;" width="16" height="16" viewBox="0 0 16 16"><path d="M7 4h-3l-3 3v8h12.500v-6" fill="none" stroke="#1b8bd3" stroke-width="1.500"/><path d="M1 7l3-3v3z" fill="#1b8bd3"/><circle cx="11.700" cy="4.200" r="3.600" fill="#1b8bd3"/><path d="M9.800 4.200h3.800" stroke="#fff" stroke-width="1.200"/></svg>
<div class="r" style="left:79px;top:440px;width:1495px;height:1px;background:#f4f4f4;"></div>
<div class="r" style="left:79px;top:461px;width:1495px;height:1px;background:#f4f4f4;"></div>
<div class="r" style="left:79px;top:482px;width:1495px;height:1px;background:#f4f4f4;"></div>
<div class="r" style="left:79px;top:503px;width:1495px;height:1px;background:#f4f4f4;"></div>
<div class="r" style="left:79px;top:524px;width:1495px;height:1px;background:#f4f4f4;"></div>
<div class="r" style="left:79px;top:545px;width:1495px;height:1px;background:#f4f4f4;"></div>
<div class="r" style="left:79px;top:566px;width:1495px;height:1px;background:#f4f4f4;"></div>
<div class="r" style="left:79px;top:587px;width:1495px;height:1px;background:#f4f4f4;"></div>
<div class="r" style="left:79px;top:608px;width:1495px;height:1px;background:#f4f4f4;"></div>
<div class="r" style="left:79px;top:629px;width:1495px;height:1px;background:#f4f4f4;"></div>
<div class="r" style="left:79px;top:650px;width:1495px;height:1px;background:#f4f4f4;"></div>
<div class="r" style="left:79px;top:671px;width:1495px;height:1px;background:#f4f4f4;"></div>
<div class="r" style="left:79px;top:692px;width:1495px;height:1px;background:#f4f4f4;"></div>
<div class="r" style="left:79px;top:713px;width:1495px;height:1px;background:#f4f4f4;"></div>
<div class="r" style="left:79px;top:734px;width:1495px;height:1px;background:#f4f4f4;"></div>
<div class="r" style="left:79px;top:755px;width:1495px;height:1px;background:#f4f4f4;"></div>
<div class="r" style="left:79px;top:776px;width:1495px;height:1px;background:#f4f4f4;"></div>
<div class="r" style="left:79px;top:797px;width:1495px;height:1px;background:#f4f4f4;"></div>
<div class="r" style="left:166px;top:420px;width:1px;height:379px;background:#f4f4f4;"></div>
<div class="r" style="left:278px;top:420px;width:1px;height:379px;background:#f4f4f4;"></div>
<div class="r" style="left:402px;top:420px;width:1px;height:379px;background:#f4f4f4;"></div>
<div class="r" style="left:49px;top:440px;width:29px;height:1px;background:#5e5e5e;"></div>
<div class="r" style="left:49px;top:461px;width:29px;height:1px;background:#5e5e5e;"></div>
<div class="r" style="left:49px;top:482px;width:29px;height:1px;background:#5e5e5e;"></div>
<div class="r" style="left:49px;top:503px;width:29px;height:1px;background:#5e5e5e;"></div>
<div class="r" style="left:49px;top:524px;width:29px;height:1px;background:#5e5e5e;"></div>
<div class="r" style="left:49px;top:545px;width:29px;height:1px;background:#5e5e5e;"></div>
<div class="r" style="left:49px;top:566px;width:29px;height:1px;background:#5e5e5e;"></div>
<div class="r" style="left:49px;top:587px;width:29px;height:1px;background:#5e5e5e;"></div>
<div class="r" style="left:49px;top:608px;width:29px;height:1px;background:#5e5e5e;"></div>
<div class="r" style="left:49px;top:629px;width:29px;height:1px;background:#5e5e5e;"></div>
<div class="r" style="left:49px;top:650px;width:29px;height:1px;background:#5e5e5e;"></div>
<div class="r" style="left:49px;top:671px;width:29px;height:1px;background:#5e5e5e;"></div>
<div class="r" style="left:49px;top:692px;width:29px;height:1px;background:#5e5e5e;"></div>
<div class="r" style="left:49px;top:713px;width:29px;height:1px;background:#5e5e5e;"></div>
<div class="r" style="left:49px;top:734px;width:29px;height:1px;background:#5e5e5e;"></div>
<div class="r" style="left:49px;top:755px;width:29px;height:1px;background:#5e5e5e;"></div>
<div class="r" style="left:49px;top:776px;width:29px;height:1px;background:#5e5e5e;"></div>
<div class="r" style="left:49px;top:797px;width:29px;height:1px;background:#5e5e5e;"></div>
<div class="r" style="left:78px;top:420px;width:1px;height:380px;background:#5e5e5e;"></div>
<div class="r" style="left:49px;top:419px;width:353px;height:1px;background:#5e5e5e;"></div>
<div class="r" style="left:166px;top:391px;width:1px;height:28px;background:#5a5a5a;"></div>
<div class="r" style="left:278px;top:391px;width:1px;height:28px;background:#5a5a5a;"></div>
<div class="r" style="left:402px;top:391px;width:1px;height:28px;background:#5a5a5a;"></div>
<div class="r" style="left:78px;top:419px;width:88px;height:21px;background:transparent;border:1.200px solid #222;box-sizing:border-box;"></div>
<span class="t" style="left:85px;top:397.500px;font-size:11px;line-height:12px;color:#1b8bd3;letter-spacing:-.8px;">123</span>
<svg class="r" style="left:94px;top:405px;" width="7" height="7" viewBox="0 0 7 7"><circle cx="3.500" cy="3.500" r="3.200" fill="#f08a2c"/></svg>
<span class="t" style="left:285px;top:397.500px;font-size:11px;line-height:12px;color:#1b8bd3;letter-spacing:-.8px;">123</span>
<svg class="r" style="left:294px;top:405px;" width="7" height="7" viewBox="0 0 7 7"><circle cx="3.500" cy="3.500" r="3.200" fill="#f08a2c"/></svg>
<span class="t" style="left:173px;top:399.500px;font-size:8.500px;line-height:10px;color:#1480c8;font-weight:bold;letter-spacing:0px;">ABC</span>
<svg class="r" style="left:151.0px;top:402.5px;" width="10" height="5.0" viewBox="0 0 10 5.0"><polygon points="0,0 10,0 5.0,5.0" fill="#2f9ae0"/></svg>
<svg class="r" style="left:263.0px;top:402.5px;" width="10" height="5.0" viewBox="0 0 10 5.0"><polygon points="0,0 10,0 5.0,5.0" fill="#2f9ae0"/></svg>
<svg class="r" style="left:386.5px;top:402.5px;" width="10" height="5.0" viewBox="0 0 10 5.0"><polygon points="0,0 10,0 5.0,5.0" fill="#2f9ae0"/></svg>
<svg class="r" style="left:1579px;top:400px;" width="15" height="15" viewBox="0 0 15 15"><rect x="1.700" y=".7" width="12.600" height="12.600" fill="#fff" stroke="#1b8bd3" stroke-width="1.400"/><rect x="7" y="1.400" width="5" height="7.600" fill="#5bc4ee"/><rect x="11.800" y=".7" width="2.800" height="12.600" fill="#1b8bd3"/><circle cx="3.300" cy="11.300" r="3.600" fill="#f6f6f6"/><path d="M3.300 7.800v7M-.2 11.300h7M.9 8.900l4.800 4.800M5.700 8.900l-4.800 4.800" stroke="#1b8bd3" stroke-width="1.300"/><circle cx="3.300" cy="11.300" r="2.200" fill="#1b8bd3"/><circle cx="3.300" cy="11.300" r="1" fill="#fff"/></svg>
<span class="t" style="left:1586.500px;top:428.500px;width:0;height:0;"><span style="position:absolute;left:-15px;top:-8px;width:30px;height:16px;line-height:16px;text-align:center;font-size:12px;transform:rotate(90deg);">面板</span></span>
<svg class="r" style="left:1578px;top:458px;" width="15" height="14" viewBox="0 0 15 14"><rect x=".7" y=".7" width="13.300" height="12.600" fill="#fff" stroke="#1b8bd3" stroke-width="1.400"/><path d="M2 2.500h10M2 6.500h10" stroke="#1b8bd3" stroke-width="2" stroke-dasharray="2 2"/><path d="M4 4.500h9M4 8.500h9" stroke="#2f9fe0" stroke-width="2" stroke-dasharray="2 2"/></svg>
<svg class="r" style="left:1578px;top:479px;" width="16" height="16" viewBox="0 0 16 16"><circle cx="8" cy="8" r="6.800" fill="#fff" stroke="#1b8bd3" stroke-width="1.500"/><path d="M5.500 6h1.400M9.100 6h1.400M5.500 10h1.400M9.100 10h1.400" stroke="#1b8bd3" stroke-width="1.700"/></svg>
<svg class="r" style="left:1578px;top:502px;" width="15" height="15" viewBox="0 0 15 15"><rect x=".7" y="4" width="13.600" height="10.300" rx="1" fill="#fff" stroke="#1b8bd3" stroke-width="1.300"/><path d="M1 7.500h13M1 10.800h13M8.500 4v10M11.500 4v10" stroke="#1b8bd3" stroke-width="1.100"/><rect x="3.500" y="3.500" width="3" height="11" fill="#fff" stroke="#f5821f" stroke-width="1.200"/><path d="M3.500 7.500h3M3.500 10.800h3M5 0v3M3.500 1.500h3" stroke="#f5821f" stroke-width="1.100"/></svg>
<svg class="r" style="left:1578px;top:524px;" width="16" height="15" viewBox="0 0 16 15"><path d="M.8 13.500v-12.700h13.500v7M.8 13.500h8" fill="none" stroke="#1b8bd3" stroke-width="1.500"/><rect x=".8" y=".8" width="13.500" height="2" fill="#1b8bd3"/><rect x="2" y="4" width="6" height="4.500" fill="#5bc4ee"/><path d="M10 11.500h5M10 10v3M15 10v3" stroke="#1b8bd3" stroke-width="1.100"/></svg>
<svg class="r" style="left:1578px;top:546px;" width="16" height="15" viewBox="0 0 16 15"><circle cx="3.500" cy="3.500" r="2.800" fill="#5aa5dd" stroke="#1b8bd3" stroke-width="1"/><path d="M2 3.500h3" stroke="#fff" stroke-width="1.200"/><circle cx="11.500" cy="3.500" r="2.800" fill="#5aa5dd" stroke="#1b8bd3" stroke-width="1"/><path d="M10 3.500h3M11.500 2v3" stroke="#fff" stroke-width="1"/><circle cx="3.500" cy="11" r="2.800" fill="#fff" stroke="#1b8bd3" stroke-width="1"/><path d="M2 9.500l3 3M5 9.500l-3 3" stroke="#1b8bd3" stroke-width="1"/><circle cx="11.500" cy="11" r="2.800" fill="#fff" stroke="#f5821f" stroke-width="1.300"/><path d="M10 10.300h3M10 11.800h3" stroke="#f5821f" stroke-width="1"/></svg>
<svg class="r" style="left:1577px;top:816px;" width="16" height="15" viewBox="0 0 16 15"><rect x=".5" y="1" width="4" height="13" rx="1" fill="#1b8bd3"/><path d="M6 12.500h8" stroke="#1b8bd3" stroke-width="2.600"/><path d="M14 9c0-3.500-2-5.500-5-5.500" fill="none" stroke="#1b8bd3" stroke-width="1.600"/><path d="M10 .5l-3 3 3 3z" fill="#1b8bd3"/></svg>
<div class="r" style="left:23px;top:341px;width:1px;height:493px;background:#d0d0d0;"></div>
<div class="r" style="left:23px;top:833px;width:1577px;height:1px;background:#d0d0d0;"></div>
<svg class="r" style="left:60px;top:810px;" width="15" height="15" viewBox="0 0 15 15"><path d="M2.200 8.500a5.300 5.300 0 0 1 9.300-4.500M12.800 6.500a5.300 5.300 0 0 1-9.300 4.500" fill="none" stroke="#1b8bd3" stroke-width="1.500"/><path d="M12.800 1v4h-4zM2.200 14v-4h4z" fill="#1b8bd3"/><path d="M5 8.200l1.700 1.600 3.300-3.600" fill="none" stroke="#1b8bd3" stroke-width="1.300"/></svg>
<svg class="r" style="left:118.0px;top:816.25px;" width="7" height="3.5" viewBox="0 0 7 3.5"><polygon points="0,0 7,0 3.5,3.5" fill="#1a1a1a"/></svg>
<svg class="r" style="left:134px;top:810px;" width="2" height="14" viewBox="0 0 2 14"><line x1="1" y1="0" x2="1" y2="14" stroke="#b9b19e" stroke-width="2" stroke-dasharray="2 2"/></svg>
<svg class="r" style="left:145px;top:810px;" width="15" height="15" viewBox="0 0 15 15"><circle cx="7.500" cy="7.500" r="6.500" fill="none" stroke="#a8a8a8" stroke-width="1.200"/><path d="M4.300 7.700l2.300 2.300 4.200-4.600" fill="none" stroke="#a8a8a8" stroke-width="1.300"/></svg>
<svg class="r" style="left:204.0px;top:816.25px;" width="7" height="3.5" viewBox="0 0 7 3.5"><polygon points="0,0 7,0 3.5,3.5" fill="#6a6a6a"/></svg>
<svg class="r" style="left:221px;top:811px;" width="13" height="13" viewBox="0 0 13 13"><rect x=".6" y=".6" width="11.800" height="11.800" fill="none" stroke="#a8a8a8" stroke-width="1.100"/><path d="M3.500 3.500l6 6M9.500 3.500l-6 6" stroke="#a8a8a8" stroke-width="1.100"/></svg>
<div class="r" style="left:273px;top:804px;width:1px;height:27px;background:#7a7a7a;"></div>
<svg class="r" style="left:284px;top:811px;" width="16" height="13" viewBox="0 0 16 13"><path d="M0 1.300h14M0 6.300h8M0 11.300h6" stroke="#1b8bd3" stroke-width="2"/><path d="M8 12.500l6.500-6" stroke="#1b8bd3" stroke-width="2"/></svg>
<svg class="r" style="left:308px;top:811px;" width="16" height="13" viewBox="0 0 16 13"><path d="M0 1.300h14M0 6.300h6M0 11.300h6" stroke="#1b8bd3" stroke-width="1.800"/><path d="M11.500 5v8M7.500 9h8" stroke="#27a327" stroke-width="2"/></svg>
<svg class="r" style="left:332px;top:811px;" width="15" height="14" viewBox="0 0 15 14"><path d="M0 1.300h14" stroke="#1b8bd3" stroke-width="1.800"/><path d="M0 6.500h2M0 10.500h2" stroke="#1b8bd3" stroke-width="1.600"/><path d="M6.500 4.500c-2.200 1.200-2.200 7.800 0 9M10.500 4.500c2.200 1.200 2.200 7.800 0 9" fill="none" stroke="#1b8bd3" stroke-width="1.400"/><path d="M8.500 6.500v5M6 9h5" stroke="#27a327" stroke-width="1.400"/></svg>
<svg class="r" style="left:356px;top:811px;" width="16" height="13" viewBox="0 0 16 13"><path d="M0 1.300h14M0 6.300h6M0 11.300h6" stroke="#1b8bd3" stroke-width="1.800"/><path d="M7.500 9h8" stroke="#ff3b1e" stroke-width="2.200"/></svg>
<svg class="r" style="left:379px;top:810px;" width="2" height="14" viewBox="0 0 2 14"><line x1="1" y1="0" x2="1" y2="14" stroke="#b9b19e" stroke-width="2" stroke-dasharray="2 2"/></svg>
<svg class="r" style="left:388px;top:810px;" width="12" height="14" viewBox="0 0 12 14"><path d="M1.200 0v14" stroke="#a4a4a4" stroke-width="2.300"/><path d="M11 1l-6 6 6 6" fill="none" stroke="#a4a4a4" stroke-width="2.100"/></svg>
<svg class="r" style="left:412px;top:810px;" width="9" height="14" viewBox="0 0 9 14"><path d="M8 1l-6 6 6 6" fill="none" stroke="#a4a4a4" stroke-width="2.100"/></svg>
<svg class="r" style="left:437px;top:810px;" width="9" height="14" viewBox="0 0 9 14"><path d="M1 1l6 6-6 6" fill="none" stroke="#1b8bd3" stroke-width="2.100"/></svg>
<svg class="r" style="left:457px;top:810px;" width="12" height="14" viewBox="0 0 12 14"><path d="M10.800 0v14" stroke="#1b8bd3" stroke-width="2.300"/><path d="M1 1l6 6-6 6" fill="none" stroke="#1b8bd3" stroke-width="2.100"/></svg>
<svg class="r" style="left:479px;top:811px;" width="14" height="13" viewBox="0 0 14 13"><path d="M3.500 .7h-2.800v11.600h2.800M10.500 .7h2.800v11.600h-2.800" fill="none" stroke="#a0a0a0" stroke-width="1.300"/><path d="M4.500 3.500h3.500l1.500 1.500v4.500h-5z" fill="none" stroke="#a0a0a0" stroke-width="1"/></svg>
<svg class="r" style="left:502px;top:810px;" width="2" height="14" viewBox="0 0 2 14"><line x1="1" y1="0" x2="1" y2="14" stroke="#b9b19e" stroke-width="2" stroke-dasharray="2 2"/></svg>
<svg class="r" style="left:518px;top:809px;" width="13" height="15" viewBox="0 0 13 15"><path d="M1 9v5h11v-5" fill="none" stroke="#1b8bd3" stroke-width="1.500"/><path d="M6.500 11v-9M3 5l3.500-3.500 3.500 3.500" fill="none" stroke="#1b8bd3" stroke-width="1.600"/></svg>
<svg class="r" style="left:608.0px;top:816.25px;" width="7" height="3.5" viewBox="0 0 7 3.5"><polygon points="0,0 7,0 3.5,3.5" fill="#1a1a1a"/></svg>
<svg class="r" style="left:624px;top:810px;" width="2" height="14" viewBox="0 0 2 14"><line x1="1" y1="0" x2="1" y2="14" stroke="#b9b19e" stroke-width="2" stroke-dasharray="2 2"/></svg>
<svg class="r" style="left:631px;top:810px;" width="15" height="15" viewBox="0 0 15 15"><path d="M6.09 2.18L6.25 0.21L8.75 0.21L8.91 2.18L10.26 2.74L11.77 1.46L13.54 3.23L12.26 4.74L12.82 6.09L14.79 6.25L14.79 8.75L12.82 8.91L12.26 10.26L13.54 11.77L11.77 13.54L10.26 12.26L8.91 12.82L8.75 14.79L6.25 14.79L6.09 12.82L4.74 12.26L3.23 13.54L1.46 11.77L2.74 10.26L2.18 8.91L0.21 8.75L0.21 6.25L2.18 6.09L2.74 4.74L1.46 3.23L3.23 1.46L4.74 2.74z" fill="#1b8bd3"/><circle cx="7.500" cy="7.500" r="2.600" fill="#6cc7f0"/></svg>
<svg class="r" style="left:715px;top:809px;" width="15" height="15" viewBox="0 0 15 15"><path d="M1 9v5h13v-5" fill="none" stroke="#1b8bd3" stroke-width="1.500"/><path d="M2 1l5.500 5.500 5.500-5.500M7.500 6.500v4.500M5.500 9l2 2 2-2" fill="none" stroke="#1b8bd3" stroke-width="1.300"/></svg>
<svg class="r" style="left:751px;top:810px;" width="2" height="14" viewBox="0 0 2 14"><line x1="1" y1="0" x2="1" y2="14" stroke="#b9b19e" stroke-width="2" stroke-dasharray="2 2"/></svg>
<span class="t" style="left:780px;top:808px;font-size:9px;line-height:12px;color:#555;letter-spacing:.5px;">...</span>
<div class="r" style="left:778px;top:834px;width:1px;height:22px;background:#a0a0a0;"></div>
<div class="r" style="left:814px;top:834px;width:1px;height:22px;background:#a0a0a0;"></div>
<div class="r" style="left:841px;top:834px;width:1px;height:22px;background:#a0a0a0;"></div>
<div class="r" style="left:975px;top:834px;width:1px;height:22px;background:#a0a0a0;"></div>
<div class="r" style="left:1103px;top:834px;width:1px;height:22px;background:#a0a0a0;"></div>
<div class="r" style="left:1231px;top:834px;width:1px;height:22px;background:#a0a0a0;"></div>
<svg class="r" style="left:1315px;top:840px;" width="2" height="14" viewBox="0 0 2 14"><line x1="1" y1="0" x2="1" y2="14" stroke="#b9b19e" stroke-width="2" stroke-dasharray="2 2"/></svg>
<div class="r" style="left:294px;top:860px;width:45px;height:40px;background:#333333;"></div>
<div class="r" style="left:339px;top:860px;width:3px;height:40px;background:#262626;"></div>
<div class="r" style="left:294px;top:898px;width:48px;height:2px;background:#76b9ed;"></div>
<svg class="r" style="left:16px;top:872px;" width="16" height="16" viewBox="0 0 16 16"><path d="M0 2.300l6-.8v5.500h-6zM7 1.350l9-1.350v7h-9zM0 8h6v6.500l-6-.8zM7 8h9v8l-9-1.350z" fill="#fff"/></svg>
<svg class="r" style="left:64px;top:871px;" width="17" height="17" viewBox="0 0 17 17"><circle cx="10.500" cy="6.500" r="5.300" fill="none" stroke="#fff" stroke-width="1.200"/><path d="M6.700 10.300l-6.200 6.200" stroke="#fff" stroke-width="1.400"/></svg>
<svg class="r" style="left:111px;top:872px;" width="17" height="16" viewBox="0 0 17 16"><rect x="1.600" y="4.600" width="10" height="6.400" fill="none" stroke="#fff" stroke-width="1.200"/><path d="M1.600 0v2.400h10v-2.400M1.600 16v-2.400h10v2.400" fill="none" stroke="#fff" stroke-width="1.200"/><path d="M15.300 0v4M15.300 8.500v7.500" stroke="#fff" stroke-width="1.300"/><rect x="14" y="4.600" width="2.700" height="2.700" fill="#fff"/></svg>
<svg class="r" style="left:158px;top:867px;" width="25" height="24" viewBox="0 0 25 24"><g transform="translate(13.2 12.8) scale(1.36) translate(-12.5 -13.5)"><path d="M12.500 5.500a7.500 7.500 0 1 0 7.200 9.500h-4.200a3.800 3.800 0 0 1-6.700-1.500h11.200a7.500 7.500 0 0 0-7.500-8zM8.800 11a3.700 3.700 0 0 1 7.200 0z" fill="#2fb0f2"/></g><path d="M2.500 22c-2.500-2-1-6.500 3.500-11.500 4.500-5 10.500-9 15-9 3 0 4 2 2.500 5.500" fill="none" stroke="#f4c430" stroke-width="1.800"/></svg>
<svg class="r" style="left:209px;top:870px;" width="22" height="19" viewBox="0 0 22 19"><path d="M0 1.800a1.300 1.300 0 0 1 1.300-1.300h6.500l1.700 1.700h11a1.300 1.300 0 0 1 1.300 1.300v15h-21.800z" fill="#f4c64a"/><path d="M0 4h21.800v14.500h-21.800z" fill="#fde18d"/><path d="M4 19v-8.200h14v8.200h-4.300v-4.400h-5.400v4.400z" fill="#38a9ea"/><rect x="8.300" y="14.600" width="5.400" height="4.400" fill="#000"/></svg>
<svg class="r" style="left:256.5px;top:867.0px;" width="25" height="25" viewBox="0 0 24 24"><circle cx="12" cy="12" r="10.68" fill="#fff" stroke="#4fbcc0" stroke-width="1.65"/><path d="M11.400 13.200l2.900 2.500 2.600-.3-.6 5.600c-2.500 1.300-5.500 1.300-8.300-.2l2.300-5.300z" fill="#2e2522"/><ellipse cx="15.700" cy="8.400" rx="1.900" ry="1.200" transform="rotate(-15 15.700 8.400)" fill="#2e2522"/><path d="M5.300 8.300c-.9 1.800-.6 4.200.5 6.200.3-2.300.6-4 1.300-5.700z" fill="#3a302c"/><path d="M6.500 9c1-2.500 3.500-4.300 7-4.600" fill="none" stroke="#6a5f5a" stroke-width=".7"/><circle cx="10.400" cy="7.500" r=".55" fill="#3a302c"/><path d="M16 12l.6 2.900M17.800 12l-.6 2.600" stroke="#3a302c" stroke-width=".6" fill="none"/></svg>
<svg class="r" style="left:305.5px;top:867.0px;" width="25" height="25" viewBox="0 0 24 24"><circle cx="12" cy="12" r="10.68" fill="#fff" stroke="#4fbcc0" stroke-width="1.65"/><path d="M11.400 13.200l2.900 2.500 2.600-.3-.6 5.600c-2.500 1.300-5.500 1.300-8.300-.2l2.300-5.300z" fill="#2e2522"/><ellipse cx="15.700" cy="8.400" rx="1.900" ry="1.200" transform="rotate(-15 15.700 8.400)" fill="#2e2522"/><path d="M5.300 8.300c-.9 1.800-.6 4.200.5 6.200.3-2.300.6-4 1.300-5.700z" fill="#3a302c"/><path d="M6.500 9c1-2.500 3.500-4.300 7-4.600" fill="none" stroke="#6a5f5a" stroke-width=".7"/><circle cx="10.400" cy="7.500" r=".55" fill="#3a302c"/><path d="M16 12l.6 2.900M17.800 12l-.6 2.600" stroke="#3a302c" stroke-width=".6" fill="none"/></svg>
<svg class="r" style="left:1347px;top:875px;" width="14" height="9" viewBox="0 0 14 9"><path d="M1 8l6-6.500 6 6.500" fill="none" stroke="#fff" stroke-width="1.400"/></svg>
<svg class="r" style="left:1372px;top:871px;" width="15" height="18" viewBox="0 0 15 18"><rect x="2.500" y="1" width="5.500" height="4" fill="none" stroke="#fff" stroke-width="1"/><rect x="1" y="5" width="8.500" height="11" rx="1" fill="none" stroke="#fff" stroke-width="1.100"/><path d="M4 2.500h.8M5.800 2.500h.8" stroke="#fff" stroke-width="1"/><path d="M8 14.500l2 2 4-4" fill="none" stroke="#ccc" stroke-width="1"/></svg>
<svg class="r" style="left:1393px;top:873px;" width="18" height="14" viewBox="0 0 18 14"><rect x="4" y="1" width="12.500" height="9" fill="none" stroke="#fff" stroke-width="1.100"/><path d="M10 10v3M6.500 13.300h7" stroke="#fff" stroke-width="1.100"/><rect x=".6" y=".6" width="3.500" height="3" fill="#000" stroke="#fff" stroke-width="1"/><path d="M2.300 3.600v9.500h4" fill="none" stroke="#fff" stroke-width="1"/></svg>
<svg class="r" style="left:1417px;top:873px;" width="18" height="14" viewBox="0 0 18 14"><path d="M1 4.500h3l3.500-3.500v12l-3.500-3.500h-3z" fill="none" stroke="#fff" stroke-width="1.100" stroke-linejoin="round"/><path d="M9.500 4.500a3.500 3.500 0 0 1 0 5M11.800 2.500a6.500 6.500 0 0 1 0 9M14.200 .8a9 9 0 0 1 0 12.400" fill="none" stroke="#fff" stroke-width="1.100"/></svg>
<svg class="r" style="left:1559px;top:872px;" width="17" height="16" viewBox="0 0 17 16"><path d="M.7.700h15v11h-5.500l-2 2.500-2-2.500h-5.500z" fill="none" stroke="#fff" stroke-width="1.300"/></svg>
<div class="r" style="left:1595px;top:860px;width:1px;height:40px;background:#5a5a5a;"></div>
<div class="wm" style="left:-292px;top:132px;"><span style="letter-spacing:.9px">audit审计03(Audit3)</span><br><span style="letter-spacing:.5px">audit-172.18.210.237</span></div>
<div class="wm" style="left:8px;top:132px;"><span style="letter-spacing:.9px">audit审计03(Audit3)</span><br><span style="letter-spacing:.5px">audit-172.18.210.237</span></div>
<div class="wm" style="left:308px;top:132px;"><span style="letter-spacing:.9px">audit审计03(Audit3)</span><br><span style="letter-spacing:.5px">audit-172.18.210.237</span></div>
<div class="wm" style="left:608px;top:132px;"><span style="letter-spacing:.9px">audit审计03(Audit3)</span><br><span style="letter-spacing:.5px">audit-172.18.210.237</span></div>
<div class="wm" style="left:908px;top:132px;"><span style="letter-spacing:.9px">audit审计03(Audit3)</span><br><span style="letter-spacing:.5px">audit-172.18.210.237</span></div>
<div class="wm" style="left:1208px;top:132px;"><span style="letter-spacing:.9px">audit审计03(Audit3)</span><br><span style="letter-spacing:.5px">audit-172.18.210.237</span></div>
<div class="wm" style="left:1508px;top:132px;"><span style="letter-spacing:.9px">audit审计03(Audit3)</span><br><span style="letter-spacing:.5px">audit-172.18.210.237</span></div>
<div class="wm" style="left:-292px;top:432px;"><span style="letter-spacing:.9px">audit审计03(Audit3)</span><br><span style="letter-spacing:.5px">audit-172.18.210.237</span></div>
<div class="wm" style="left:8px;top:432px;"><span style="letter-spacing:.9px">audit审计03(Audit3)</span><br><span style="letter-spacing:.5px">audit-172.18.210.237</span></div>
<div class="wm" style="left:308px;top:432px;"><span style="letter-spacing:.9px">audit审计03(Audit3)</span><br><span style="letter-spacing:.5px">audit-172.18.210.237</span></div>
<div class="wm" style="left:608px;top:432px;"><span style="letter-spacing:.9px">audit审计03(Audit3)</span><br><span style="letter-spacing:.5px">audit-172.18.210.237</span></div>
<div class="wm" style="left:908px;top:432px;"><span style="letter-spacing:.9px">audit审计03(Audit3)</span><br><span style="letter-spacing:.5px">audit-172.18.210.237</span></div>
<div class="wm" style="left:1208px;top:432px;"><span style="letter-spacing:.9px">audit审计03(Audit3)</span><br><span style="letter-spacing:.5px">audit-172.18.210.237</span></div>
<div class="wm" style="left:1508px;top:432px;"><span style="letter-spacing:.9px">audit审计03(Audit3)</span><br><span style="letter-spacing:.5px">audit-172.18.210.237</span></div>
<div class="wm" style="left:-292px;top:732px;"><span style="letter-spacing:.9px">audit审计03(Audit3)</span><br><span style="letter-spacing:.5px">audit-172.18.210.237</span></div>
<div class="wm" style="left:8px;top:732px;"><span style="letter-spacing:.9px">audit审计03(Audit3)</span><br><span style="letter-spacing:.5px">audit-172.18.210.237</span></div>
<div class="wm" style="left:308px;top:732px;"><span style="letter-spacing:.9px">audit审计03(Audit3)</span><br><span style="letter-spacing:.5px">audit-172.18.210.237</span></div>
<div class="wm" style="left:608px;top:732px;"><span style="letter-spacing:.9px">audit审计03(Audit3)</span><br><span style="letter-spacing:.5px">audit-172.18.210.237</span></div>
<div class="wm" style="left:908px;top:732px;"><span style="letter-spacing:.9px">audit审计03(Audit3)</span><br><span style="letter-spacing:.5px">audit-172.18.210.237</span></div>
<div class="wm" style="left:1208px;top:732px;"><span style="letter-spacing:.9px">audit审计03(Audit3)</span><br><span style="letter-spacing:.5px">audit-172.18.210.237</span></div>
<div class="wm" style="left:1508px;top:732px;"><span style="letter-spacing:.9px">audit审计03(Audit3)</span><br><span style="letter-spacing:.5px">audit-172.18.210.237</span></div>
</body></html>
